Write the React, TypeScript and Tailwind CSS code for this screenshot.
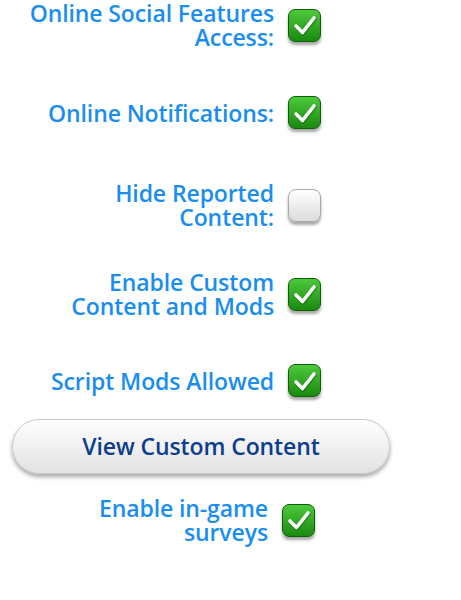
import React from 'react';

const Check: React.FC<{ on: boolean }> = ({ on }) => {
  if (!on) {
    return (
      <div className="w-[33px] h-[33px] shrink-0 rounded-[8px] border border-[#a9a9a9] bg-gradient-to-b from-[#ffffff] to-[#dcdcdc] shadow-[0_3px_3px_rgba(0,0,0,0.35)]" />
    );
  }
  return (
    <div className="w-[33px] h-[33px] shrink-0 rounded-[7px] border border-[#0f5e0a] bg-gradient-to-b from-[#4cc93a] to-[#188a0f] shadow-[0_3px_3px_rgba(0,0,0,0.35)] flex items-center justify-center">
      <svg width="24" height="22" viewBox="0 0 24 22">
        <path d="M3 12 L9.5 18.5 L21 4" fill="none" stroke="#0a4a06" strokeOpacity="0.35" strokeWidth="4.5" strokeLinecap="round" strokeLinejoin="round" transform="translate(0.5,1)" />
        <path d="M3 12 L9.5 18.5 L21 4" fill="none" stroke="#ffffff" strokeWidth="3.6" strokeLinecap="round" strokeLinejoin="round" />
      </svg>
    </div>
  );
};

const Row: React.FC<{ lines: string[]; on: boolean; className?: string }> = ({ lines, on, className }) => (
  <div className={`flex items-center gap-[14px] ${className || ''}`}>
    <div className="w-[274px] text-right text-[23px] leading-[24px] font-semibold tracking-[-0.1px] text-[#1a8ef0]">
      {lines.map((l) => (
        <div key={l}>{l}</div>
      ))}
    </div>
    <Check on={on} />
  </div>
);

export default function App() {
  return (
    <div className="w-[461px] h-[600px] bg-white font-['Open_Sans',sans-serif] pt-[1px]">
      <Row lines={['Online Social Features', 'Access:']} on />
      <Row lines={['Online Notifications:']} on className="mt-[47px]" />
      <Row lines={['Hide Reported', 'Content:']} on={false} className="mt-[52px]" />
      <Row lines={['Enable Custom', 'Content and Mods']} on className="mt-[41px]" />
      <Row lines={['Script Mods Allowed']} on className="mt-[46px]" />
      <button className="ml-[12px] mt-[22px] w-[378px] h-[55px] rounded-full border border-[#c9c9c9] bg-gradient-to-b from-[#ffffff] to-[#e2e2e2] shadow-[0_3px_4px_rgba(0,0,0,0.35)] text-[23px] font-semibold tracking-[-0.1px] text-[#0c3d8f]">
        View Custom Content
      </button>
      <Row lines={['Enable in-game', 'surveys']} on className="mt-[22px] -ml-[6px]" />
    </div>
  );
}
